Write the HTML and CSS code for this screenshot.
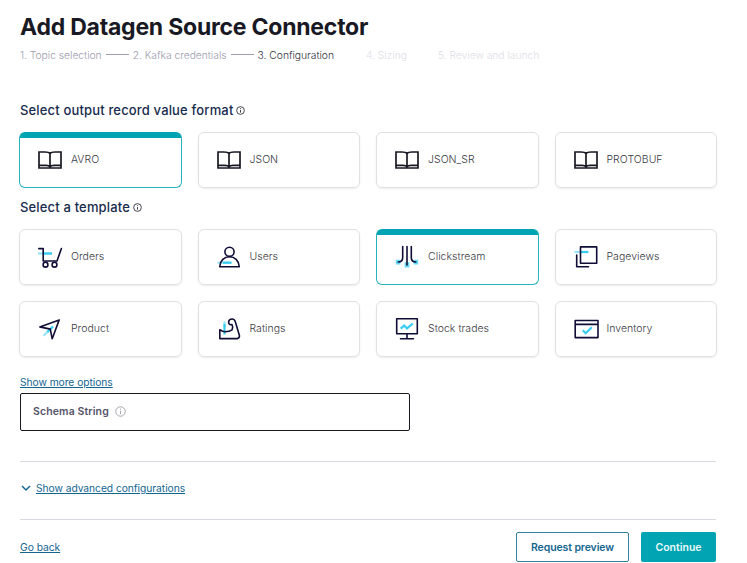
FILE: index.html
```html
<!DOCTYPE html>
<html lang="en">
<head>
<meta charset="utf-8">
<title>Add Datagen Source Connector</title>
<link rel="stylesheet" href="styles.css">
</head>
<body>
<svg class="defs" aria-hidden="true">
  <symbol id="book" viewBox="0 0 24 24"><path d="M1 4H7Q11 4 12 5.5Q13 4 17 4H23V20H1ZM12 6V19M1 17.4H8Q11 17.4 12 18.7Q13 17.4 16 17.4H23"/></symbol>
  <symbol id="info" viewBox="0 0 10 10"><circle cx="5" cy="5" r="4.3"/><path d="M5 4.4V7.4M5 2.4V3.4"/></symbol>
</svg>
<main class="page">
  <h1>Add Datagen Source Connector</h1>
  <ol class="steps">
    <li class="done">1. Topic selection</li>
    <li class="done">2. Kafka credentials</li>
    <li class="current">3. Configuration</li>
    <li class="todo">4. Sizing</li>
    <li class="todo">5. Review and launch</li>
  </ol>

  <h2>Select output record value format <svg class="info"><use href="#info"/></svg></h2>
  <div class="cards">
    <div class="card selected"><svg class="icon book"><use href="#book"/></svg><span>AVRO</span></div>
    <div class="card"><svg class="icon book"><use href="#book"/></svg><span>JSON</span></div>
    <div class="card"><svg class="icon book"><use href="#book"/></svg><span>JSON_SR</span></div>
    <div class="card"><svg class="icon book"><use href="#book"/></svg><span>PROTOBUF</span></div>
  </div>

  <h2 class="template-title">Select a template <svg class="info"><use href="#info"/></svg></h2>
  <div class="cards">
    <div class="card"><svg class="icon" viewBox="0 0 24 24"><path class="accent pale" d="M0 8.5H14"/><path class="accent" d="M6 8.5H14"/><path d="M.8 3.6H5.2V16H19L23.4 3.6"/><circle cx="7.5" cy="19.7" r="2.4"/><circle cx="16.5" cy="19.7" r="2.4"/></svg><span>Orders</span></div>
    <div class="card"><svg class="icon" viewBox="0 0 24 24"><path class="accent pale" d="M.5 17.7H14.5"/><path class="accent" d="M6 17.7H14.5"/><circle cx="12.5" cy="6.8" r="4.6"/><path d="M2.7 21.7C3.2 15.5 7.3 11.8 12.5 11.8S21.8 15.5 22.3 21.7Z"/></svg><span>Users</span></div>
    <div class="card selected"><svg class="icon" viewBox="0 0 24 24"><path class="fill" d="M.8 14.8H5.4V19.6H.8ZM9.6 17.2H14.4V22.4H9.6ZM18.6 14.8H23.2V19.6H18.6Z"/><path d="M7.7 1.6V12.5Q7.7 17 3.2 17M12 1.6V20M16.3 1.6V12.5Q16.3 17 20.8 17"/></svg><span>Clickstream</span></div>
    <div class="card"><svg class="icon" viewBox="0 0 24 24"><path class="accent pale" d="M.5 7H14.3"/><path class="accent" d="M7 7H14.3"/><path d="M6.5 1.9H22.7V18.3H6.5ZM2.7 10V21.7H14.5"/></svg><span>Pageviews</span></div>
    <div class="card"><svg class="icon" viewBox="0 0 24 24"><path class="accent pale" d="M5.5 18.8L15 9.5"/><path class="accent" d="M9.5 15L15 9.5"/><path d="M21.2 2.9L1.8 9.9L12.3 12.1L14.2 21.8Z"/></svg><span>Product</span></div>
    <div class="card"><svg class="icon" viewBox="0 0 24 24"><path class="accent pale" d="M7.5 4.3V10"/><path class="accent" d="M7.5 7V17.5"/><path d="M2.8 12.7Q5.5 14.8 8.2 14.8Q12.5 14.7 15.1 12.8Q16.4 9.8 15 7.6C12.5 8.2 11.5 6.6 11.6 5C11.8 3 13.5 2 15.2 2C17.2 2 18 3.4 18.4 5L22.4 18.4Q22.8 20.7 20.5 21.6H2.8Z"/></svg><span>Ratings</span></div>
    <div class="card"><svg class="icon" viewBox="0 0 24 24"><path d="M1.7 1.8H22.3V16.7H1.7ZM12 16.7V21.7M5.5 21.7H18.5"/><path class="accent" d="M5.7 11.6L9.2 8.5L12 11.4L17.8 6.5"/></svg><span>Stock trades</span></div>
    <div class="card"><svg class="icon" viewBox="0 0 24 24"><path d="M1.2 3.5H24V20.6H1.2ZM1.2 7.4H24"/><path class="accent" d="M8.8 13.3L11.7 16.3L17.8 10.3"/></svg><span>Inventory</span></div>
  </div>

  <div class="more"><a href="#">Show more options</a></div>
  <div class="field"><span>Schema String</span><svg class="info"><use href="#info"/></svg></div>

  <div class="advanced"><svg viewBox="0 0 10 8"><path d="M1 2L5 6L9 2"/></svg><a href="#">Show advanced configurations</a></div>

  <footer>
    <a class="back" href="#">Go back</a>
    <button class="outline">Request preview</button>
    <button class="primary">Continue</button>
  </footer>
</main>
</body>
</html>
```

FILE: styles.css
```css
* { box-sizing: border-box; }
body { margin: 0; background: #fff; color: #3a3a42; font-family: Inter, sans-serif; font-size: 11px; overflow: hidden; }
.defs { position: absolute; width: 0; height: 0; }
.page { width: 697px; margin-left: 20px; padding-top: 12px; }
svg { fill: none; flex: none; overflow: visible; }
h1 { margin: 0; font-size: 23px; line-height: 30px; font-weight: 650; letter-spacing: -.23px; color: #191924; white-space: nowrap; }

.steps { display: flex; align-items: center; list-style: none; margin: 5px 0 0; padding: 0; height: 16px; font-size: 10.3px; font-weight: 300; letter-spacing: -.02px; white-space: nowrap; }
.steps li { display: flex; align-items: center; }
.steps .done { color: #9c9bad; }
.steps .done::after { content: ""; width: 23px; height: 1px; margin: 0 4px 2px; background: #a09eb3; }
.steps .current { color: #30303a; margin-right: 32px; }
.steps .todo { color: #dedee6; margin-right: 31px; }

h2 { display: flex; align-items: center; gap: 3px; margin: 37px 0 0; height: 20px; font-size: 13px; font-weight: 550; letter-spacing: .16px; color: #172b4d; white-space: nowrap; }
h2 .info { width: 9px; height: 9px; stroke: #30303a; stroke-width: 1; }
h2.template-title { margin-top: 9px; }

.cards { display: grid; grid-template-columns: repeat(4, 1fr); gap: 16px; margin: 12px 0 0 -1px; }
.card { height: 56px; display: flex; align-items: center; gap: 9px; padding-left: 18px; border: 1px solid #e1e1e4; border-radius: 6px; box-shadow: 0 1px 2px rgba(0, 0, 0, .08); font-size: 10.5px; font-weight: 300; letter-spacing: .02px; }
.card span { margin-top: -1px; }
.card.selected { border-color: #27b1b9; border-top-color: #00a4b2; background: linear-gradient(#00a4b2 6px, #fff 6px) border-box; box-shadow: none; }
.icon { width: 24px; height: 24px; stroke: #100d36; stroke-width: 1.6; stroke-linejoin: round; stroke-linecap: round; }
.icon.book { stroke: #191924; stroke-width: 1.7; stroke-linejoin: miter; stroke-linecap: butt; }
.icon .accent { stroke: #38cdf0; stroke-width: 2.2; stroke-linecap: butt; stroke-linejoin: miter; }
.icon .pale { stroke: #96e6f7; }
.icon .fill { fill: #65daf4; stroke: none; }

a { color: #146690; text-decoration: underline; text-underline-offset: 1px; letter-spacing: -.04px; }
.more { height: 36px; padding-top: 17px; line-height: 16px; font-size: 10.25px; }
.field { width: 390px; height: 38px; display: flex; align-items: center; gap: 6px; padding: 0 12px 1px; border: 1px solid #191924; border-radius: 2px; color: #55536a; font-size: 10.5px; font-weight: 600; letter-spacing: .12px; }
.field .info { width: 11px; height: 11px; stroke: #9a9aa5; stroke-width: .8; margin-top: -1px; }
.advanced { width: 696px; height: 59px; display: flex; align-items: center; gap: 5px; margin-top: 30px; padding: 0 0 5px 1px; border: solid #d9dae1; border-width: 1px 0; font-size: 10.25px; }
.advanced svg { width: 10px; height: 8px; stroke: #146690; stroke-width: 1.5; }
footer { width: 696px; display: flex; align-items: center; gap: 12px; padding-top: 12px; font-size: 10.3px; }
.back { margin-right: auto; }
button { height: 30px; border-radius: 2px; padding: 0; font: 600 10.5px Inter, sans-serif; }
.outline { width: 113px; border: 1px solid #327f9f; background: #fff; color: #146690; letter-spacing: -.1px; }
.primary { width: 75px; border: 0; background: #00a4b2; color: #e9f9fa; }
```
